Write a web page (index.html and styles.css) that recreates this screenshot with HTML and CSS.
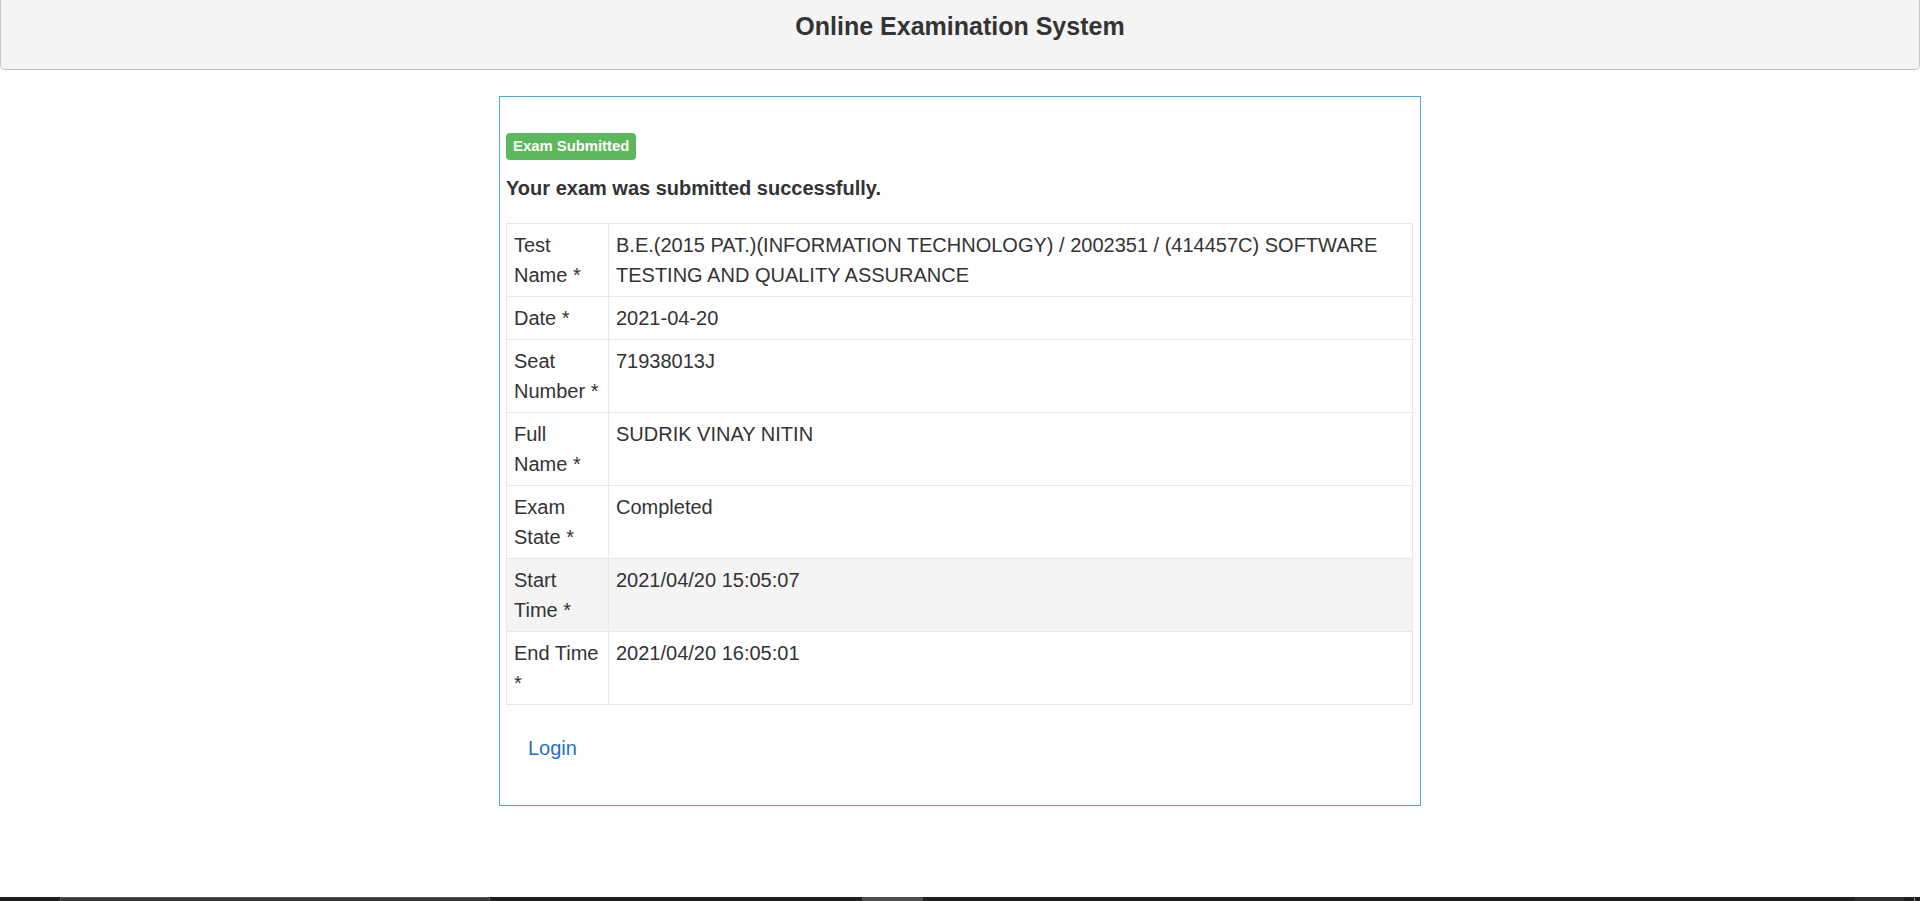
FILE: index.html
```html
<!DOCTYPE html>
<html lang="en">
<head>
<meta charset="utf-8">
<title>Online Examination System</title>
<link rel="stylesheet" href="styles.css">
</head>
<body>
<header class="topbar">
  <h3 class="topbar-title">Online Examination System</h3>
</header>
<main class="page">
  <section class="result-box">
    <div class="badge-row"><span class="badge-success">Exam Submitted</span></div>
    <h4 class="result-heading">Your exam was submitted successfully.</h4>
    <table class="info-table">
      <colgroup><col class="col-label"><col class="col-value"></colgroup>
      <tbody>
        <tr><td>Test Name *</td><td>B.E.(2015 PAT.)(INFORMATION TECHNOLOGY) / 2002351 / (414457C) SOFTWARE TESTING AND QUALITY ASSURANCE</td></tr>
        <tr><td>Date *</td><td>2021-04-20</td></tr>
        <tr><td>Seat Number *</td><td>71938013J</td></tr>
        <tr><td>Full Name *</td><td>SUDRIK VINAY NITIN</td></tr>
        <tr><td>Exam State *</td><td>Completed</td></tr>
        <tr class="row-hover"><td>Start Time *</td><td>2021/04/20 15:05:07</td></tr>
        <tr><td>End Time *</td><td>2021/04/20 16:05:01</td></tr>
      </tbody>
    </table>
    <div class="links"><a class="login-link" href="#">Login</a></div>
  </section>
</main>
<footer class="taskbar">
  <span class="tb-seg tb-dark tb-w60"></span>
  <span class="tb-seg tb-app tb-w430"></span>
  <span class="tb-seg tb-dark tb-w372"></span>
  <span class="tb-seg tb-mid tb-w61"></span>
  <span class="tb-seg tb-dark tb-grow"></span>
  <span class="tb-seg tb-soft tb-w50"></span>
  <span class="tb-seg tb-dark tb-w10"></span>
  <span class="tb-seg tb-line tb-w1"></span>
  <span class="tb-seg tb-dark tb-w5"></span>
</footer>
</body>
</html>
```

FILE: styles.css
```css
* { box-sizing: border-box; }

html, body { margin: 0; padding: 0; }

body {
  font-family: "Liberation Sans", Arial, sans-serif;
  font-size: 20px;
  color: #333333;
  background: #ffffff;
  min-height: 901px;
  display: flex;
  flex-direction: column;
}

.topbar {
  height: 70px;
  background: #f4f4f4;
  border: 1px solid #c3c9ce;
  border-top: none;
  border-bottom-color: #b4bcc3;
  border-radius: 0 0 5px 5px;
  padding-top: 11px;
}

.topbar-title {
  margin: 0;
  text-align: center;
  font-size: 25px;
  line-height: 30px;
  font-weight: bold;
  color: #333333;
}

.page {
  flex: 1;
  padding-top: 26px;
}

.result-box {
  width: 922px;
  margin: 0 auto;
  border: 1px solid #4ea5d9;
  padding: 36px 7px 42px 6px;
}

.badge-row { display: flex; }

.badge-success {
  display: inline-block;
  background: #5cb85c;
  color: #ffffff;
  font-weight: bold;
  font-size: 14.85px;
  line-height: 15px;
  padding: 6px 7px;
  border-radius: 4px;
  white-space: nowrap;
}

.result-heading {
  margin: 17px 0 24px;
  font-size: 20px;
  line-height: 22px;
  font-weight: bold;
}

.info-table {
  width: 100%;
  border-collapse: collapse;
  table-layout: fixed;
  border: 1px solid #e8e8e8;
}

.col-label { width: 102px; }

.info-table td {
  border: 1px solid #e8e8e8;
  padding: 6px 7px;
  line-height: 30px;
  vertical-align: top;
}

.row-hover td { background: #f4f4f4; }

.links {
  padding: 28px 0 0 22px;
  line-height: 30px;
}

.login-link {
  color: #1a6fd6;
  text-decoration: none;
}

.taskbar {
  display: flex;
  height: 4px;
  background: #1f1f1f;
}

.tb-seg { display: block; height: 4px; }
.tb-dark { background: #1f1f1f; }
.tb-app { background: #383838; border-top: 1px solid #555555; border-left: 1px solid #555555; border-right: 1px solid #555555; }
.tb-mid { background: #4d4d4d; }
.tb-soft { background: #2d2d2d; }
.tb-line { background: #8a8a8a; }
.tb-w60 { width: 60px; }
.tb-w430 { width: 430px; }
.tb-w372 { width: 372px; }
.tb-w61 { width: 61px; }
.tb-w50 { width: 50px; }
.tb-w10 { width: 10px; }
.tb-w1 { width: 1px; }
.tb-w5 { width: 5px; }
.tb-grow { flex: 1; }
```
